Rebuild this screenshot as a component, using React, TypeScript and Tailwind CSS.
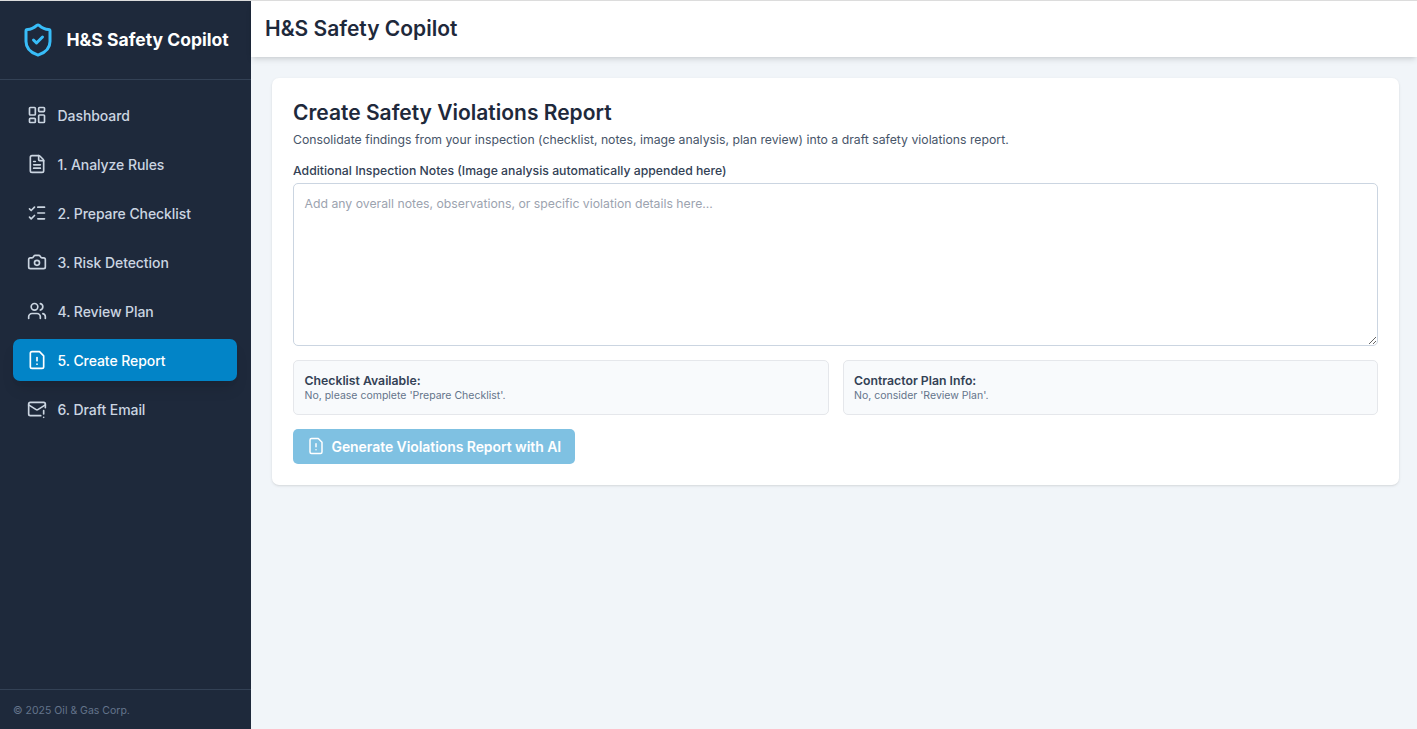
import { Camera, FileText, LayoutDashboard, ListChecks, MailWarning, Users } from "lucide-react";

function FileAlert({ className, strokeWidth = 2 }: { className?: string; strokeWidth?: number }) {
  return (
    <svg className={className} viewBox="0 0 24 24" fill="none" stroke="currentColor" strokeWidth={strokeWidth} strokeLinecap="round" strokeLinejoin="round">
      <path d="M15 2H6a2 2 0 0 0-2 2v16a2 2 0 0 0 2 2h12a2 2 0 0 0 2-2V7Z" />
      <path d="M12 9v4" />
      <path d="M12 17h.01" />
    </svg>
  );
}

const items = [
  { label: "Dashboard", Icon: LayoutDashboard },
  { label: "1. Analyze Rules", Icon: FileText },
  { label: "2. Prepare Checklist", Icon: ListChecks },
  { label: "3. Risk Detection", Icon: Camera },
  { label: "4. Review Plan", Icon: Users },
  { label: "5. Create Report", Icon: FileAlert, active: true },
  { label: "6. Draft Email", Icon: MailWarning },
];

function InfoCard({ title, text }: { title: string; text: string }) {
  return (
    <div className="h-[55px] rounded-[5px] border border-gray-200 bg-[#f8fafc] px-[10.5px] pt-[11px]">
      <h3 className="text-[12.25px] leading-[17.5px] font-semibold text-[#334155]">{title}</h3>
      <p className="text-[10.5px] leading-[12px] text-[#64748b]">{text}</p>
    </div>
  );
}

export default function App() {
  return (
    <div className="flex h-[729px] flex-col overflow-hidden border-t border-[#dcdcdc] bg-[#f1f5f9] font-['Inter',sans-serif]">
      <div className="flex min-h-0 flex-1">
        <aside className="flex w-[251px] shrink-0 flex-col bg-[#1e293b]">
          <div className="flex h-[79px] items-center gap-[10.5px] border-b border-[#334155] pl-5">
            <svg className="size-9 text-[#38bdf8]" viewBox="0 0 24 24" fill="none" stroke="currentColor" strokeWidth="2" strokeLinecap="round" strokeLinejoin="round">
              <path d="M20 13c0 5-3.5 7.5-7.66 8.95a1 1 0 0 1-.67-.01C7.5 20.5 4 18 4 13V6a1 1 0 0 1 1-1c2 0 4.500-1.200 6.240-2.720a1.170 1.170 0 0 1 1.520 0C14.510 3.810 17 5 19 5a1 1 0 0 1 1 1z" />
              <path d="m9 12 2 2 4-4" />
            </svg>
            <span className="text-[17.5px] leading-6 font-bold tracking-[0.02px] text-white">H&amp;S Safety Copilot</span>
          </div>
          <nav className="flex flex-1 flex-col gap-[7px] pt-[14px] pr-[14px] pl-[13px]">
            {items.map(({ label, Icon, active }) => (
              <a
                key={label}
                className={
                  active
                    ? "flex h-[42px] items-center gap-[10.5px] rounded-[7px] bg-[#0284c7] pl-[14px] text-[14px] font-medium tracking-[-0.07px] text-white shadow-lg"
                    : "flex h-[42px] items-center gap-[10.5px] rounded-[7px] pl-[14px] text-[14px] font-medium tracking-[-0.07px] text-[#cbd5e1]"
                }
              >
                <Icon className="size-5 shrink-0" strokeWidth={2} />
                {label}
              </a>
            ))}
          </nav>
          <footer className="h-10 border-t border-[#334155] pt-[14px] pl-[13px] text-[10.5px] leading-[14px] text-[#64748b]">© 2025 Oil &amp; Gas Corp.</footer>
        </aside>
        <div className="flex min-w-0 flex-1 flex-col">
          <header className="flex h-14 shrink-0 items-center bg-white pl-[14px] shadow-md">
            <h1 className="text-[21px] leading-7 font-semibold text-[#1e293b]">H&amp;S Safety Copilot</h1>
          </header>
          <main className="flex-1 pt-[21px] pr-[18px] pl-[21px]">
            <section className="h-[407px] rounded-[7px] bg-white px-[21px] pt-[21px] shadow-sm">
              <h2 className="text-[21px] leading-7 font-semibold text-[#1e293b]">Create Safety Violations Report</h2>
              <p className="mt-[4px] text-[12.25px] leading-[17.5px] text-[#475569]">
                Consolidate findings from your inspection (checklist, notes, image analysis, plan review) into a draft safety violations report.
              </p>
              <label className="mt-[13px] block text-[12.25px] leading-[17.5px] font-medium text-[#334155]" htmlFor="notes">
                Additional Inspection Notes (Image analysis automatically appended here)
              </label>
              <textarea
                id="notes"
                className="mt-[4px] block h-[163px] w-full rounded-[5px] border border-[#cbd5e1] bg-white px-[10.5px] py-[11px] text-[12.25px] leading-[17.5px] placeholder:text-[#9ca3af]"
                placeholder="Add any overall notes, observations, or specific violation details here..."
              />
              <div className="mt-[14px] grid grid-cols-2 gap-[14px]">
                <InfoCard title="Checklist Available:" text="No, please complete 'Prepare Checklist'." />
                <InfoCard title="Contractor Plan Info:" text="No, consider 'Review Plan'." />
              </div>
              <button className="mt-[14px] flex h-[35px] w-[282px] items-center gap-[6.5px] rounded-[5px] bg-[#0284c7] pl-[14px] text-[14px] font-semibold tracking-[-0.07px] whitespace-nowrap text-white opacity-50" disabled>
                <FileAlert className="mb-px size-[18px] shrink-0" />
                Generate Violations Report with AI
              </button>
            </section>
          </main>
        </div>
      </div>
    </div>
  );
}
